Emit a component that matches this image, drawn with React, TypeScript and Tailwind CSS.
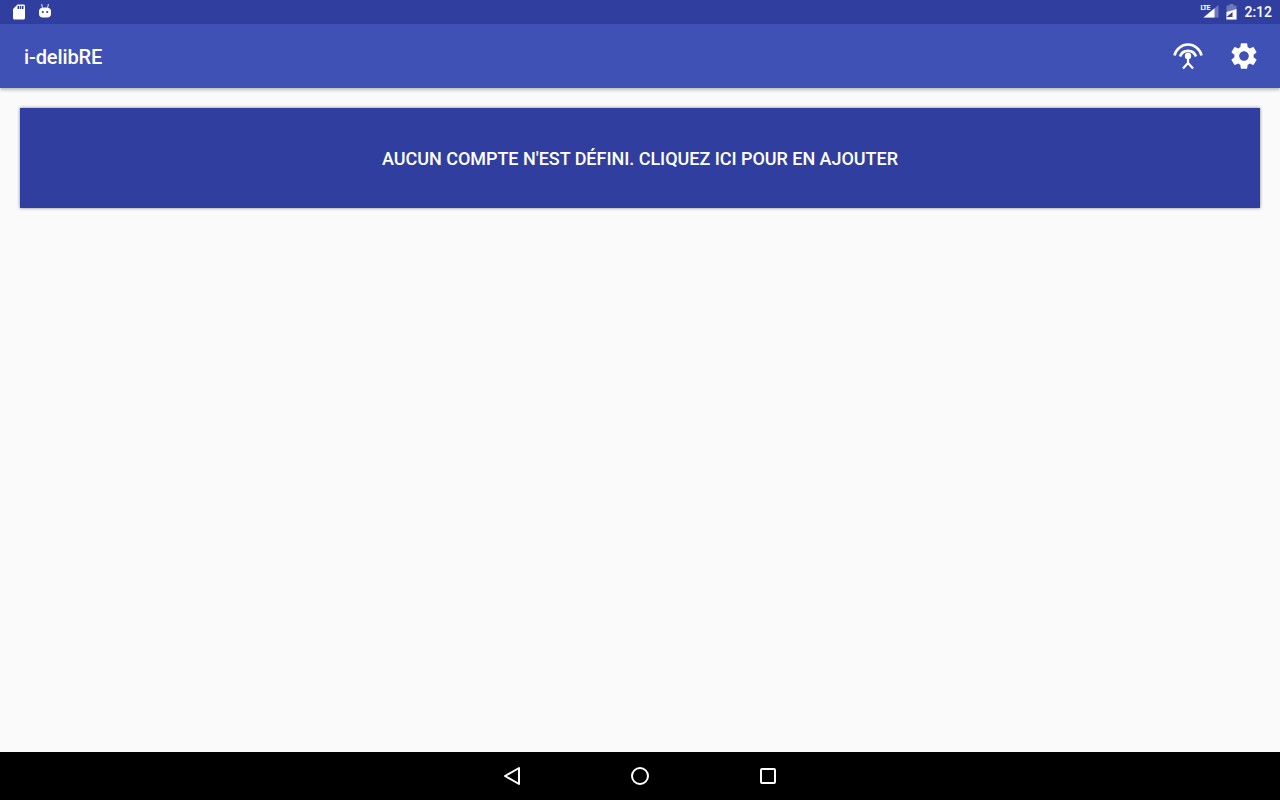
import * as React from "react";
import { MdSdStorage, MdSettings } from "react-icons/md";

function AndroidHead() {
  return (
    <svg width="18" height="18" viewBox="0 0 18 18">
      <path d="M5.5 1 L6.5 5 M12.5 1 L11.5 5" stroke="#fff" strokeOpacity="0.7" strokeWidth="1.2" fill="none" />
      <path d="M3 8 C3 5.5 5.5 4.5 9 4.5 C12.5 4.5 15 5.5 15 8 V11 C15 13 13.5 14.5 11.5 14.5 H6.5 C4.5 14.5 3 13 3 11 Z" fill="#fff" />
      <circle cx="6.8" cy="9" r="1.1" fill="#303f9f" />
      <circle cx="11.2" cy="9" r="1.1" fill="#303f9f" />
    </svg>
  );
}

function SignalIcon() {
  return (
    <svg width="18" height="18" viewBox="0 0 18 18">
      <path d="M16.5 2 V14.5 H1.5 Z" fill="#fff" fillOpacity="0.3" />
      <path d="M12.5 5.3 V14.5 H1.5 Z" fill="#fff" />
    </svg>
  );
}

function BatteryIcon() {
  return (
    <svg width="12" height="17" viewBox="0 0 12 17">
      <path d="M3.5 0 H7.5 V1.5 H10.5 V15.5 H0.5 V1.5 H3.5 Z" fill="#fff" fillOpacity="0.3" />
      <path d="M0.5 8 L6 6.5 L10.5 5 V15.5 H0.5 Z" fill="#fff" />
      <path d="M0.5 13 L6.5 8 V13 Z" fill="#303f9f" />
    </svg>
  );
}

function AntennaIcon() {
  return (
    <svg width="30" height="30" viewBox="0 0 30 30" fill="none" stroke="#fff" strokeWidth="2.6">
      <path d="M1.5 14.5 A13.8 13.8 0 0 1 28.5 14.5" />
      <path d="M7 15.5 A8.5 8.5 0 0 1 23 15.5" />
      <circle cx="15" cy="15" r="3.2" fill="#fff" stroke="none" />
      <path d="M15 17 V22 L10 27.5 M15 22 L20 27.5" strokeWidth="2.2" />
    </svg>
  );
}

export default function App() {
  return (
    <div className="flex h-[800px] w-[1280px] flex-col overflow-hidden bg-[#fafafa] font-['Roboto',sans-serif]">
      <div className="flex h-6 items-center justify-between bg-[#303f9f] pl-[10px] pr-2 text-white">
        <div className="flex items-center gap-[8px]">
          <MdSdStorage size={18} />
          <AndroidHead />
        </div>
        <div className="flex items-center">
          <div className="relative">
            <span className="absolute left-[-2px] top-[2px] text-[7px] font-bold leading-none tracking-[-0.6px]">LTE</span>
            <SignalIcon />
          </div>
          <span className="ml-[6px]"><BatteryIcon /></span>
          <span className="ml-[6px] text-sm font-medium leading-none">2:12</span>
        </div>
      </div>
      <header className="flex h-16 items-center justify-between bg-[#3f51b5] pl-6 pr-5 shadow-[0_2px_3px_rgba(0,0,0,0.25)]">
        <h1 className="pt-[2px] text-xl font-medium tracking-[-0.1px] text-white">i-delibRE</h1>
        <div className="flex items-center gap-[25px]">
          <AntennaIcon />
          <MdSettings size={32} color="#fff" />
        </div>
      </header>
      <main className="flex-1 px-5 pt-5">
        <button
          type="button"
          className="flex h-[100px] w-full items-center justify-center bg-[#303f9f] pt-[2px] text-lg font-medium tracking-[-0.03px] text-white shadow-[0_0_3px_rgba(0,0,0,0.5)]"
        >
          AUCUN COMPTE N'EST DÉFINI. CLIQUEZ ICI POUR EN AJOUTER
        </button>
      </main>
      <nav className="flex h-12 items-center justify-center gap-[104px] bg-black">
        <svg width="24" height="24" viewBox="0 0 24 24" fill="none" stroke="#fff" strokeWidth="2" strokeLinejoin="round">
          <path d="M19 4 V20 L5 12 Z" />
        </svg>
        <svg width="24" height="24" viewBox="0 0 24 24" fill="none" stroke="#fff" strokeWidth="2">
          <circle cx="12" cy="12" r="8" />
        </svg>
        <svg width="24" height="24" viewBox="0 0 24 24" fill="none" stroke="#fff" strokeWidth="2" strokeLinejoin="round">
          <rect x="5" y="5" width="14" height="14" rx="1" />
        </svg>
      </nav>
    </div>
  );
}
